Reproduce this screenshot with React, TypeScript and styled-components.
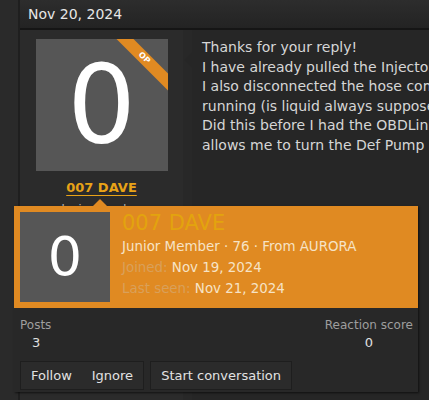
import { createGlobalStyle, styled } from "styled-components";

const GlobalStyle = createGlobalStyle`
  html, body {
    margin: 0;
    padding: 0;
    background: #232323;
    overflow: hidden;
  }
  body {
    font-family: "DejaVu Sans", Verdana, sans-serif;
  }
`;

const Screen = styled.div`
  position: relative;
  display: flex;
  width: 429px;
  height: 400px;
  background: #232323;
  overflow: hidden;
`;

const Gutter = styled.div`
  width: 18px;
  flex-shrink: 0;
  background: #2a2a2a;
  border-right: 2px solid #1f1f1f;
`;

const Thread = styled.div`
  flex: 1;
  display: flex;
  flex-direction: column;
  min-width: 0;
`;

const DateBar = styled.div`
  height: 28px;
  display: flex;
  align-items: center;
  padding-left: 8px;
  background: linear-gradient(#2d2d2d, #232323);
  border-bottom: 2px solid #151515;
  color: #e6e6e6;
  font-size: 14px;
`;

const Post = styled.div`
  flex: 1;
  display: grid;
  grid-template-columns: 163px 9px 1fr;
`;

const UserCell = styled.div`
  background: #2b2b2b;
  display: flex;
  flex-direction: column;
  align-items: center;
  padding-top: 9px;
`;

const Divider = styled.div`
  position: relative;
  background: #282828;
  &::after {
    content: "";
    position: absolute;
    right: 0;
    top: 22px;
    border: 8px solid transparent;
    border-right-color: #262626;
  }
`;

const Avatar = styled.div<{ $size: number; $digit: number }>`
  position: relative;
  width: ${(p) => p.$size}px;
  height: ${(p) => p.$size}px;
  flex-shrink: 0;
  background: #565656;
  color: #fff;
  display: flex;
  align-items: center;
  justify-content: center;
  font-size: ${(p) => p.$digit}px;
  line-height: 1;
  overflow: hidden;
`;

const OpRibbon = styled.div`
  position: absolute;
  top: 13px;
  right: -26px;
  width: 100px;
  height: 12px;
  background: #e08a22;
  transform: rotate(45deg);
  display: flex;
  align-items: center;
  justify-content: center;
  color: #fff;
  font-size: 8px;
  font-weight: 700;
  line-height: 1;
`;

const UserName = styled.a`
  margin-top: 9px;
  color: #e8a317;
  font-size: 13px;
  font-weight: 700;
  text-decoration: underline;
  text-underline-offset: 3px;
`;

const UserTitle = styled.div`
  margin-top: 7px;
  color: #bbb;
  font-size: 11px;
`;

const MessageCell = styled.div`
  background: #262626;
  padding: 8px 0 0 10px;
  overflow: hidden;
`;

const MessageLine = styled.div`
  color: #d6d6d6;
  font-size: 14px;
  line-height: 19.5px;
  white-space: nowrap;
`;

const MemberTooltip = styled.div`
  position: absolute;
  left: 14px;
  top: 206px;
  width: 404px;
  box-shadow: 1px 1px 2px rgba(0, 0, 0, 0.6);
  &::before {
    content: "";
    position: absolute;
    left: 79px;
    top: -7px;
    border: 7px solid transparent;
    border-top: 0;
    border-bottom-color: #e08a22;
  }
`;

const TooltipHeader = styled.div`
  display: flex;
  gap: 12px;
  padding: 6px;
  background: #e08a22;
`;

const TooltipInfo = styled.div`
  display: flex;
  flex-direction: column;
`;

const TooltipName = styled.div`
  color: #e3a30e;
  font-size: 21px;
  line-height: 26px;
  margin-top: -2px;
`;

const InfoLine = styled.div`
  color: #f6e3c6;
  font-size: 13.4px;
  line-height: 21px;
`;

const Faded = styled.span`
  color: #d9a05a;
`;

const TooltipBody = styled.div`
  background: #282828;
  padding: 9px 5px 2px 6px;
`;

const StatsRow = styled.div`
  display: flex;
  justify-content: space-between;
`;

const Stat = styled.div`
  display: flex;
  flex-direction: column;
`;

const StatLabel = styled.div`
  color: #9e9e9e;
  font-size: 12px;
  line-height: 16px;
`;

const StatValue = styled.div<{ $align: "left" | "center" }>`
  color: #e0e0e0;
  font-size: 13px;
  line-height: 20px;
  text-align: ${(p) => p.$align};
  padding-left: ${(p) => (p.$align === "left" ? "12px" : "0")};
`;

const ActionRow = styled.div`
  display: flex;
  gap: 6px;
  margin-top: 8px;
`;

const ButtonGroup = styled.div`
  display: flex;
  background: #2b2b2b;
  border: 1px solid #1e1e1e;
`;

const ActionButton = styled.button`
  height: 27px;
  padding: 0 10px;
  background: transparent;
  border: 0;
  color: #e2e2e2;
  font-family: "DejaVu Sans", Verdana, sans-serif;
  font-size: 13px;
  cursor: pointer;
`;

// the post body runs past the right edge of the thread column and is clipped there
const lines = [
  "Thanks for your reply!",
  "I have already pulled the Injector",
  "I also disconnected the hose coming",
  "running (is liquid always supposed",
  "Did this before I had the OBDLink",
  "allows me to turn the Def Pump on",
];

export default function App() {
  return (
    <>
      <GlobalStyle />
      <Screen>
        <Gutter />
        <Thread>
          <DateBar>Nov 20, 2024</DateBar>
          <Post>
            <UserCell>
              <Avatar $size={132} $digit={108}>
                0
                <OpRibbon>OP</OpRibbon>
              </Avatar>
              <UserName>007 DAVE</UserName>
              <UserTitle>Junior Member</UserTitle>
            </UserCell>
            <Divider />
            <MessageCell>
              {lines.map((line) => (
                <MessageLine key={line}>{line}</MessageLine>
              ))}
            </MessageCell>
          </Post>
        </Thread>

        <MemberTooltip>
          <TooltipHeader>
            <Avatar $size={90} $digit={54}>
              0
            </Avatar>
            <TooltipInfo>
              <TooltipName>007 DAVE</TooltipName>
              <InfoLine>Junior Member · 76 · From AURORA</InfoLine>
              <InfoLine>
                <Faded>Joined:</Faded> Nov 19, 2024
              </InfoLine>
              <InfoLine>
                <Faded>Last seen:</Faded> Nov 21, 2024
              </InfoLine>
            </TooltipInfo>
          </TooltipHeader>
          <TooltipBody>
            <StatsRow>
              <Stat>
                <StatLabel>Posts</StatLabel>
                <StatValue $align="left">3</StatValue>
              </Stat>
              <Stat>
                <StatLabel>Reaction score</StatLabel>
                <StatValue $align="center">0</StatValue>
              </Stat>
            </StatsRow>
            <ActionRow>
              <ButtonGroup>
                <ActionButton>Follow</ActionButton>
                <ActionButton>Ignore</ActionButton>
              </ButtonGroup>
              <ButtonGroup>
                <ActionButton>Start conversation</ActionButton>
              </ButtonGroup>
            </ActionRow>
          </TooltipBody>
        </MemberTooltip>
      </Screen>
    </>
  );
}
